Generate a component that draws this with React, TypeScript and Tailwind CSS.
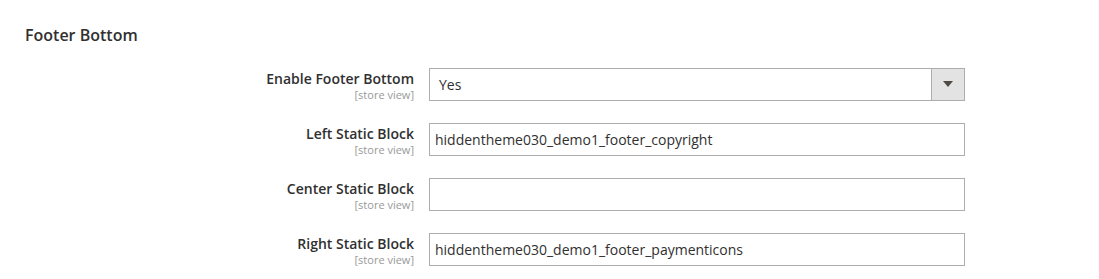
const font = { fontFamily: '"Open Sans", "Noto Sans", sans-serif' };

type Field = {
  label: string;
  value: string;
  select?: boolean;
};

const fields: Field[] = [
  { label: "Enable Footer Bottom", value: "Yes", select: true },
  { label: "Left Static Block", value: "hiddentheme030_demo1_footer_copyright" },
  { label: "Center Static Block", value: "" },
  { label: "Right Static Block", value: "hiddentheme030_demo1_footer_paymenticons" },
];

function FieldRow({ field }: { field: Field }) {
  return (
    <div className="flex items-start h-[33px] mb-[22px]">
      <div className="w-[414px] text-right pt-[1px]">
        <div className="text-[14px] font-semibold leading-[19px] text-[#303030]">{field.label}</div>
        <div className="text-[11px] leading-[13px] text-[#999999]">[store view]</div>
      </div>
      <div className="ml-[15px] w-[536px]">
        {field.select ? (
          <div className="flex h-[33px] border border-[#adadad] bg-white">
            <div className="flex-1 flex items-center pl-[9px] text-[14px] text-[#303030]">{field.value}</div>
            <div className="w-[33px] border-l border-[#adadad] bg-[#e3e3e3] flex items-center justify-center">
              <svg width="10" height="7" viewBox="0 0 10 7">
                <path d="M0 0 H10 L5 6 Z" fill="#514943" />
              </svg>
            </div>
          </div>
        ) : (
          <input
            readOnly
            value={field.value}
            className="block w-full h-[33px] border border-[#adadad] bg-white px-[5px] text-[14px] text-[#303030] outline-none"
            style={font}
          />
        )}
      </div>
    </div>
  );
}

export default function App() {
  return (
    <div className="w-[1099px] h-[279px] bg-white overflow-hidden" style={font}>
      <div className="pt-[25px] pl-[25px]">
        <h2 className="text-[16px] font-semibold leading-[20px] text-[#303030]">Footer Bottom</h2>
      </div>
      <div className="mt-[23px]">
        {fields.map((f) => (
          <FieldRow key={f.label} field={f} />
        ))}
      </div>
    </div>
  );
}
